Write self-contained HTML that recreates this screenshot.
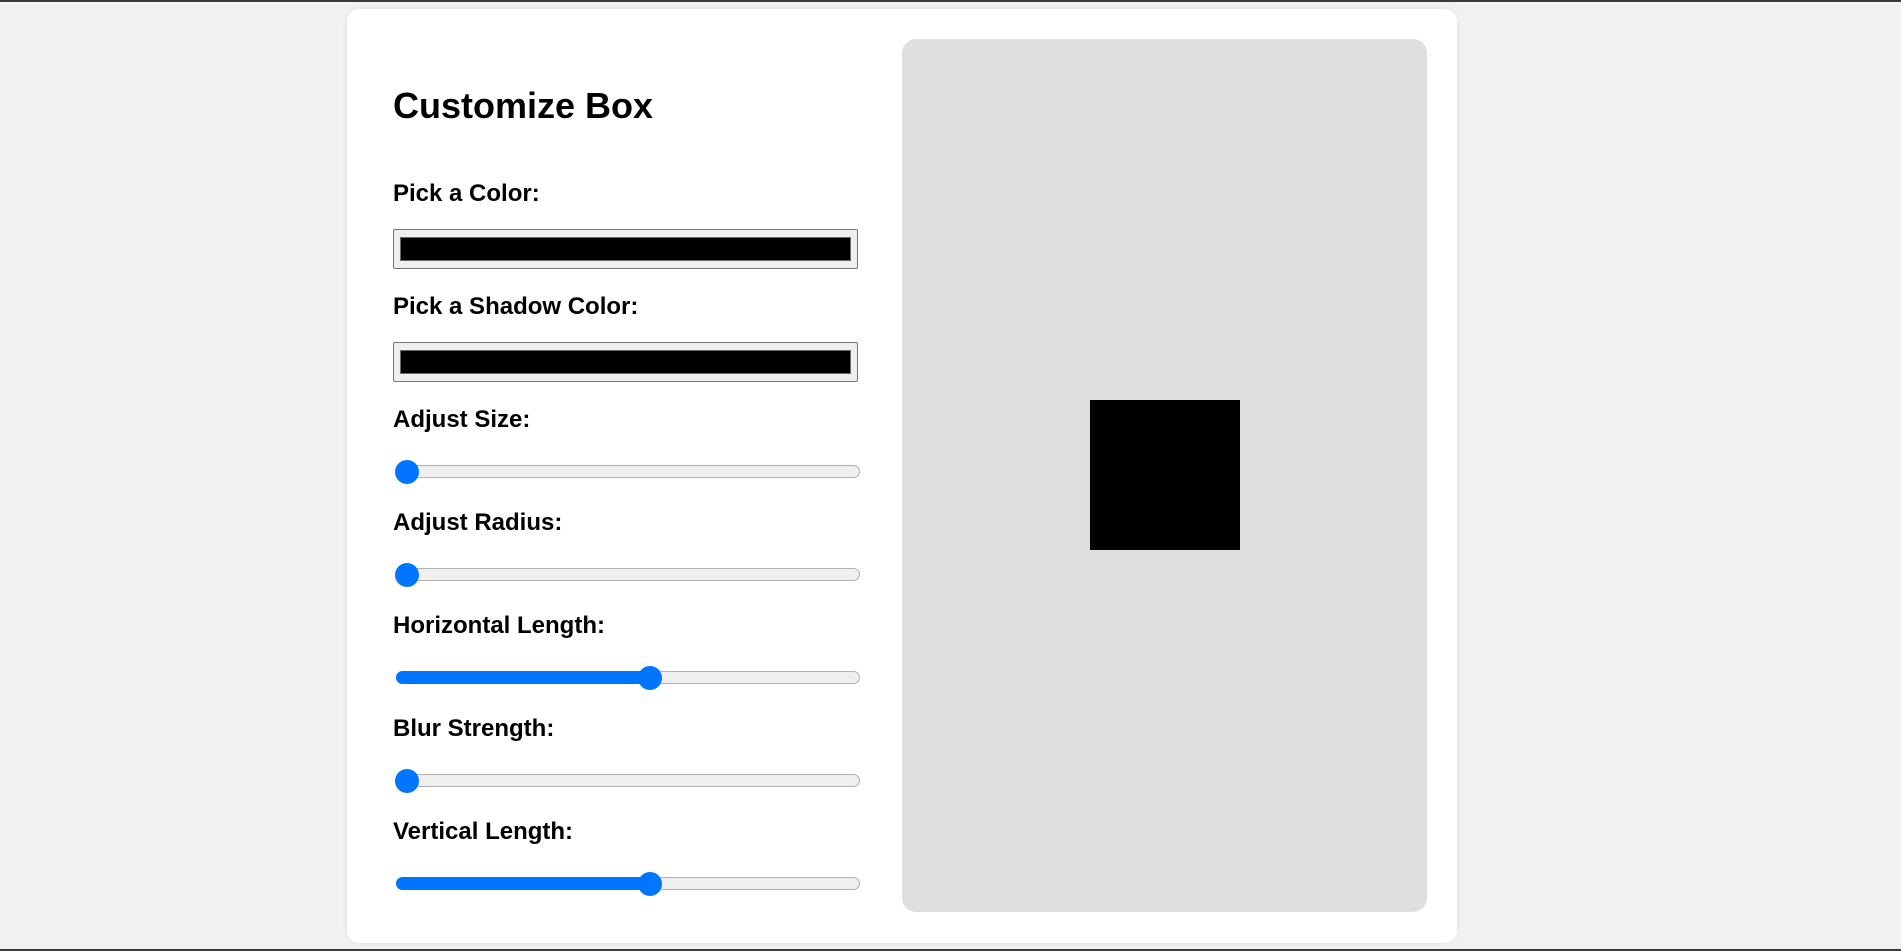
<!DOCTYPE html>
<html><head><style>
html,body{margin:0;padding:0;}
body{width:1901px;height:951px;background:#f2f2f2;position:relative;overflow:hidden;font-family:"Liberation Sans",Arial,sans-serif;}
.bar{position:absolute;left:0;width:1901px;height:2px;background:#3a3a3a;}
.card{position:absolute;left:347px;top:9px;width:1110px;height:934px;background:#fff;border-radius:12px;box-shadow:0 0 6px rgba(0,0,0,0.08);}
h1{position:absolute;margin:0;left:393px;top:88px;font-size:36px;line-height:36px;font-weight:bold;color:#000;}
.lb{position:absolute;left:393px;font-size:24px;line-height:24px;font-weight:bold;color:#000;}
.ci{position:absolute;left:393px;width:463px;height:38px;background:#efefef;border:1px solid #767676;border-radius:2px;}
.ci i{position:absolute;left:6px;top:7px;right:6px;bottom:7px;background:#000;border:1px solid #6a6a6a;}
.tr{position:absolute;left:396px;width:462px;height:11px;background:#efefef;border:1px solid #b2b2b2;border-radius:7px;}
.fl{position:absolute;left:396px;height:13px;background:#0075ff;border-radius:7px;}
.th{position:absolute;width:24px;height:24px;border-radius:50%;background:#0075ff;}
.pv{position:absolute;left:902px;top:39px;width:525px;height:873px;background:#dfdfdf;border-radius:14px;}
.bx{position:absolute;left:1090px;top:400px;width:150px;height:150px;background:#000;}
</style></head><body>
<div class="bar" style="top:0"></div>
<div class="bar" style="top:949px"></div>
<div class="card"></div>
<h1>Customize Box</h1>
<div class="lb" style="top:182px">Pick a Color:</div>
<div class="ci" style="top:229px"><i></i></div>
<div class="lb" style="top:295px">Pick a Shadow Color:</div>
<div class="ci" style="top:342px"><i></i></div>
<div class="lb" style="top:408px">Adjust Size:</div>
<div class="tr" style="top:465px"></div><div class="th" style="left:395px;top:460px"></div>
<div class="lb" style="top:511px">Adjust Radius:</div>
<div class="tr" style="top:568px"></div><div class="th" style="left:395px;top:563px"></div>
<div class="lb" style="top:614px">Horizontal Length:</div>
<div class="tr" style="top:671px"></div><div class="fl" style="top:671px;width:256px"></div><div class="th" style="left:638px;top:666px"></div>
<div class="lb" style="top:717px">Blur Strength:</div>
<div class="tr" style="top:774px"></div><div class="th" style="left:395px;top:769px"></div>
<div class="lb" style="top:820px">Vertical Length:</div>
<div class="tr" style="top:877px"></div><div class="fl" style="top:877px;width:256px"></div><div class="th" style="left:638px;top:872px"></div>
<div class="pv"></div>
<div class="bx"></div>
</body></html>
